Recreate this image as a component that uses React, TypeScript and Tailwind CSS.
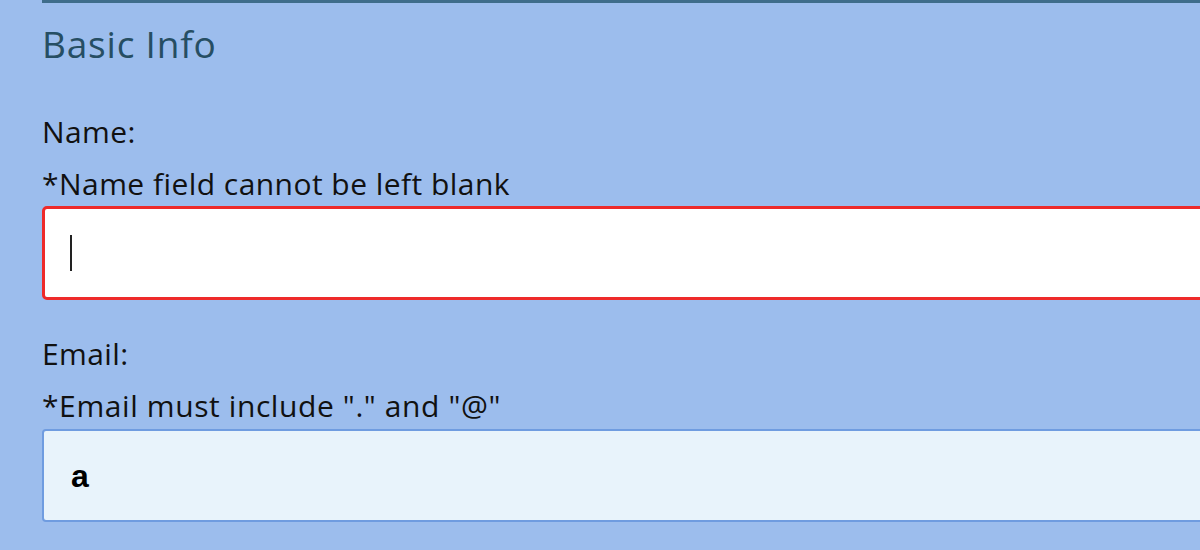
export default function App() {
  return (
    <div className="h-[550px] w-[1200px] overflow-hidden bg-[#9cbded] pl-[42px] font-['Open_Sans','Noto_Sans',sans-serif]">
      <div className="h-[3px] w-full bg-[#3f6d8b]" />

      <h2 className="mt-[17px] text-[37px] leading-[48px] tracking-[0.8px] text-[#264e63]">Basic Info</h2>

      {/* Name */}
      <div className="mt-[46px]">
        <label className="block text-[30px] leading-[36px] tracking-[0.4px] text-[#111]">Name:</label>
        <p className="mt-[16px] text-[30px] leading-[36px] tracking-[0.45px] text-[#111]">*Name field cannot be left blank</p>
        <div className="mt-[4px] flex h-[94px] w-[1200px] items-center rounded-[5px] border-[3px] border-[#ee2a2a] bg-white pl-[25px]">
          <span className="h-[36px] w-[2px] bg-[#222]" />
        </div>
      </div>

      {/* Email */}
      <div className="mt-[36px]">
        <label className="block text-[30px] leading-[36px] tracking-[0.4px] text-[#111]">Email:</label>
        <p className="mt-[16px] text-[30px] leading-[36px] tracking-[0.6px] text-[#111]">*Email must include "." and "@"</p>
        <div className="mt-[5px] flex h-[93px] w-[1200px] items-center rounded-[4px] border-2 border-[#6f9ce0] bg-[#e8f3fb] pl-[27px]">
          <span className="font-['Liberation_Sans',Arial,sans-serif] text-[32px] font-bold text-black">a</span>
        </div>
      </div>
    </div>
  );
}
